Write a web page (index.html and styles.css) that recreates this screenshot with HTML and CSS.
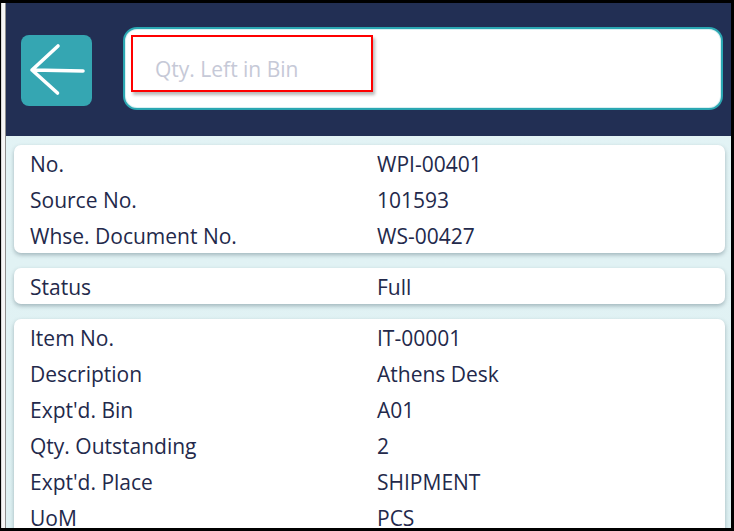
FILE: index.html
```html
<!DOCTYPE html>
<html lang="en">
<head>
<meta charset="utf-8">
<title>Warehouse Pick Line</title>
<link rel="stylesheet" href="styles.css">
</head>
<body>
<div class="screen">
  <div class="behind"></div>
  <div class="app">
    <header class="header">
      <button class="back" type="button" aria-label="Back">
        <svg width="71" height="71" viewBox="0 0 71 71">
          <path d="M37 11 L11 35 L36.5 58 M11 35 L62 36" fill="none" stroke="#ffffff" stroke-width="3.6" stroke-linecap="round" stroke-linejoin="round"/>
        </svg>
      </button>
      <div class="search">
        <div class="field"><span class="placeholder">Qty. Left in Bin</span></div>
      </div>
    </header>
    <main class="content">
      <section class="card">
        <div class="row"><span class="label">No.</span><span class="value">WPI-00401</span></div>
        <div class="row"><span class="label">Source No.</span><span class="value">101593</span></div>
        <div class="row"><span class="label">Whse. Document No.</span><span class="value">WS-00427</span></div>
      </section>
      <section class="card">
        <div class="row"><span class="label">Status</span><span class="value">Full</span></div>
      </section>
      <section class="card">
        <div class="row"><span class="label">Item No.</span><span class="value">IT-00001</span></div>
        <div class="row"><span class="label">Description</span><span class="value">Athens Desk</span></div>
        <div class="row"><span class="label">Expt'd. Bin</span><span class="value">A01</span></div>
        <div class="row"><span class="label">Qty. Outstanding</span><span class="value">2</span></div>
        <div class="row"><span class="label">Expt'd. Place</span><span class="value">SHIPMENT</span></div>
        <div class="row"><span class="label">UoM</span><span class="value">PCS</span></div>
      </section>
    </main>
  </div>
</div>
</body>
</html>
```
FILE: styles.css
```css
html, body {
  margin: 0;
  padding: 0;
  background: #000000;
}

body {
  width: 734px;
  height: 531px;
  overflow: hidden;
  font-family: "Open Sans", "Noto Sans", sans-serif;
}

.screen {
  display: flex;
  box-sizing: border-box;
  width: 734px;
  height: 531px;
  padding: 3px 3px 3px 1px;
}

.behind {
  width: 4px;
  flex: none;
  background: linear-gradient(90deg, #d9d9d9 0, #d9d9d9 1px, #f6f6f6 1px);
  border-right: 1px solid #8f8f8f;
}

.app {
  flex: 1;
  display: flex;
  flex-direction: column;
  background: linear-gradient(180deg, #e4f4f6 0%, #def0f2 100%);
  overflow: hidden;
  min-width: 0;
}

.header {
  height: 133px;
  flex: none;
  background: #222f54;
  display: flex;
  align-items: center;
  padding: 0 8px 0 15px;
  gap: 31px;
}

.back {
  width: 71px;
  height: 71px;
  flex: none;
  margin-top: 1px;
  padding: 0;
  border: 0;
  border-radius: 8px;
  background: #35a6b2;
  display: flex;
  align-items: center;
  justify-content: center;
}

.back svg {
  display: block;
}

.search {
  flex: 1;
  height: 83px;
  box-sizing: border-box;
  margin-top: -3px;
  background: #ffffff;
  border: 2px solid #2ba7b2;
  border-radius: 14px;
  box-shadow: inset 0 0 0 1px #d8f0f2;
  padding: 6px 0 0 6px;
}

.field {
  width: 242px;
  height: 57px;
  box-sizing: border-box;
  border: 2px solid #ff0000;
  box-shadow: 2px 3px 3px rgba(0, 0, 0, 0.28);
  display: flex;
  align-items: flex-start;
  padding: 22px 0 0 22px;
}

.placeholder {
  font-size: 21px;
  color: #c6c9d7;
  line-height: 1;
}

.content {
  flex: 1;
  padding: 9px 6px 0 8px;
  display: flex;
  flex-direction: column;
  gap: 15px;
}

.card {
  background: #ffffff;
  border-radius: 7px;
  box-shadow: 0 2px 4px rgba(40, 70, 80, 0.35);
  padding: 0 16px;
  flex: none;
}

.row {
  display: grid;
  grid-template-columns: 347px 1fr;
  height: 36px;
  box-sizing: border-box;
  padding-top: 2px;
  align-items: center;
  font-size: 21px;
  line-height: 34px;
  color: #23294b;
}

.label, .value {
  white-space: nowrap;
}
```
